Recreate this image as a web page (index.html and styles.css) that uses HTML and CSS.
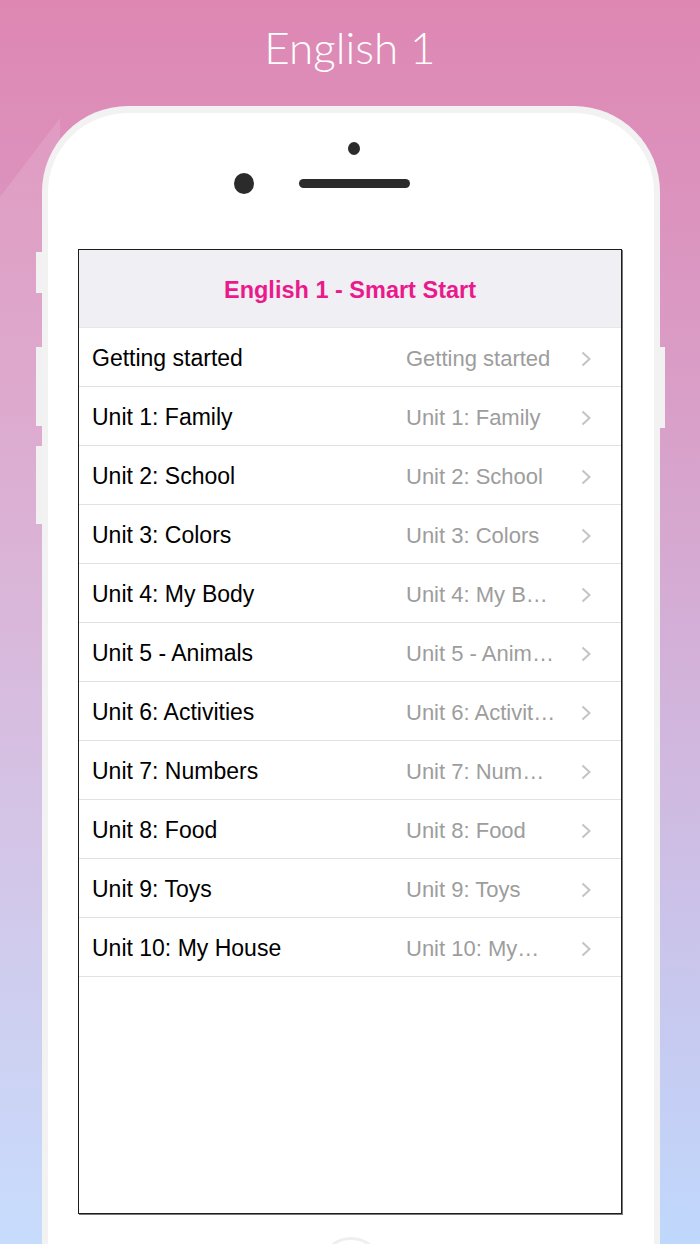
FILE: index.html
```html
<!DOCTYPE html>
<html lang="en">
<head>
  <meta charset="UTF-8" />
  <meta name="viewport" content="width=device-width, initial-scale=1.0" />
  <title>English 1</title>
  <link rel="stylesheet" href="styles.css">
</head>
<body>
  <header class="page-title">English 1</header>

  <div class="phone">
    <span class="side-btn left b1"></span>
    <span class="side-btn left b2"></span>
    <span class="side-btn left b3"></span>
    <span class="side-btn right b2"></span>

    <div class="sensors">
      <span class="cam-small"></span>
      <div class="sensor-row">
        <span class="cam-big"></span>
        <span class="speaker"></span>
      </div>
    </div>

    <div class="screen">
      <div class="nav-bar">English 1 - Smart Start</div>
      <ul class="list">
        <li class="row"><span class="label">Getting started</span><span class="detail">Getting started</span><svg class="chev" width="10" height="16" viewBox="0 0 10 16"><polyline points="1.5,1.5 8.5,8 1.5,14.5"/></svg></li>
        <li class="row"><span class="label">Unit 1: Family</span><span class="detail">Unit 1: Family</span><svg class="chev" width="10" height="16" viewBox="0 0 10 16"><polyline points="1.5,1.5 8.5,8 1.5,14.5"/></svg></li>
        <li class="row"><span class="label">Unit 2: School</span><span class="detail">Unit 2: School</span><svg class="chev" width="10" height="16" viewBox="0 0 10 16"><polyline points="1.5,1.5 8.5,8 1.5,14.5"/></svg></li>
        <li class="row"><span class="label">Unit 3: Colors</span><span class="detail">Unit 3: Colors</span><svg class="chev" width="10" height="16" viewBox="0 0 10 16"><polyline points="1.5,1.5 8.5,8 1.5,14.5"/></svg></li>
        <li class="row"><span class="label">Unit 4: My Body</span><span class="detail">Unit 4: My B…</span><svg class="chev" width="10" height="16" viewBox="0 0 10 16"><polyline points="1.5,1.5 8.5,8 1.5,14.5"/></svg></li>
        <li class="row"><span class="label">Unit 5 - Animals</span><span class="detail">Unit 5 - Anim…</span><svg class="chev" width="10" height="16" viewBox="0 0 10 16"><polyline points="1.5,1.5 8.5,8 1.5,14.5"/></svg></li>
        <li class="row"><span class="label">Unit 6: Activities</span><span class="detail">Unit 6: Activit…</span><svg class="chev" width="10" height="16" viewBox="0 0 10 16"><polyline points="1.5,1.5 8.5,8 1.5,14.5"/></svg></li>
        <li class="row"><span class="label">Unit 7: Numbers</span><span class="detail">Unit 7: Num…</span><svg class="chev" width="10" height="16" viewBox="0 0 10 16"><polyline points="1.5,1.5 8.5,8 1.5,14.5"/></svg></li>
        <li class="row"><span class="label">Unit 8: Food</span><span class="detail">Unit 8: Food</span><svg class="chev" width="10" height="16" viewBox="0 0 10 16"><polyline points="1.5,1.5 8.5,8 1.5,14.5"/></svg></li>
        <li class="row"><span class="label">Unit 9: Toys</span><span class="detail">Unit 9: Toys</span><svg class="chev" width="10" height="16" viewBox="0 0 10 16"><polyline points="1.5,1.5 8.5,8 1.5,14.5"/></svg></li>
        <li class="row"><span class="label">Unit 10: My House</span><span class="detail">Unit 10: My…</span><svg class="chev" width="10" height="16" viewBox="0 0 10 16"><polyline points="1.5,1.5 8.5,8 1.5,14.5"/></svg></li>
      </ul>
    </div>

    <div class="home-slot"><div class="home-btn"></div></div>
  </div>
</body>
</html>
```

FILE: styles.css
```css
html, body { margin: 0; padding: 0; }
body {
  width: 700px; height: 1244px; overflow: hidden; position: relative;
  font-family: "Liberation Sans", Arial, sans-serif;
  background: linear-gradient(to bottom, #de87b3 0%, #d99fc8 33%, #d0b9e0 62%, #c0d8fd 100%);
}
body::before {
  content: ""; position: absolute; left: 0; top: 0; width: 80px; height: 1244px;
  background: rgba(255, 255, 255, 0.12);
  clip-path: polygon(0 197px, 60px 118px, 60px 1244px, 0 1244px);
}

.page-title {
  position: relative; height: 106px; box-sizing: border-box; padding-top: 25px;
  text-align: center; color: #fff;
  font-family: Lato, "Open Sans", sans-serif; font-weight: 300; font-size: 44px; line-height: 44px;
}

.phone {
  position: relative; width: 618px; height: 1138px; box-sizing: border-box;
  margin-left: 42px;
  background: #fff; border: 6px solid #f2f2f2; border-top-width: 7px; border-bottom: 0;
  border-radius: 86px 86px 0 0;
}
.side-btn { position: absolute; width: 6px; background: #f1f1f1; }
.side-btn.left { left: -12px; }
.side-btn.right { right: -11px; width: 5px; }
.side-btn.b1 { top: 139px; height: 41px; }
.side-btn.b2 { top: 234px; height: 79px; }
.side-btn.b3 { top: 333px; height: 78px; }
.side-btn.right.b2 { height: 81px; }

.sensors { display: flex; flex-direction: column; align-items: center; padding-top: 29px; margin-left: 6px; }
.cam-small { width: 12px; height: 13px; border-radius: 50%; background: #2b2b2b; }
.sensor-row { display: flex; align-items: center; margin-top: 18px; padding-right: 65px; }
.cam-big { width: 20px; height: 21px; border-radius: 50%; background: #2b2b2b; margin-right: 45px; }
.speaker { width: 111px; height: 9px; border-radius: 5px; background: #2b2b2b; }

.screen {
  width: 544px; height: 965px; box-sizing: border-box; margin: 55px 0 0 30px;
  border: 1px solid #1c1c1c; box-shadow: 1px 1px 0 #777;
  background: #fff;
}
.nav-bar {
  height: 78px; box-sizing: border-box; padding-top: 4px;
  display: flex; align-items: center; justify-content: center;
  background: #efeff4; border-bottom: 1px solid #e6e6ea;
  color: #ea1a8c; font-weight: bold; font-size: 23.5px;
}
.list { list-style: none; margin: 0; padding: 0; }
.row {
  height: 59px; box-sizing: border-box; display: flex; align-items: center;
  padding: 3px 30px 0 13px; border-bottom: 1px solid #e2e2e4;
}
.label { flex: 1; font-size: 23px; color: #000; white-space: nowrap; }
.detail {
  width: 152px; font-size: 22px; color: #9d9d9d;
  white-space: nowrap; overflow: hidden; text-overflow: ellipsis;
}
.chev { margin-left: 23px; fill: none; stroke: #c4c4c8; stroke-width: 2; }

.home-slot { height: 7px; margin-top: 23px; overflow: hidden; }
.home-btn {
  width: 58px; height: 58px; margin: 0 auto; border-radius: 50%;
  border: 3px solid #efefef;
}
```
